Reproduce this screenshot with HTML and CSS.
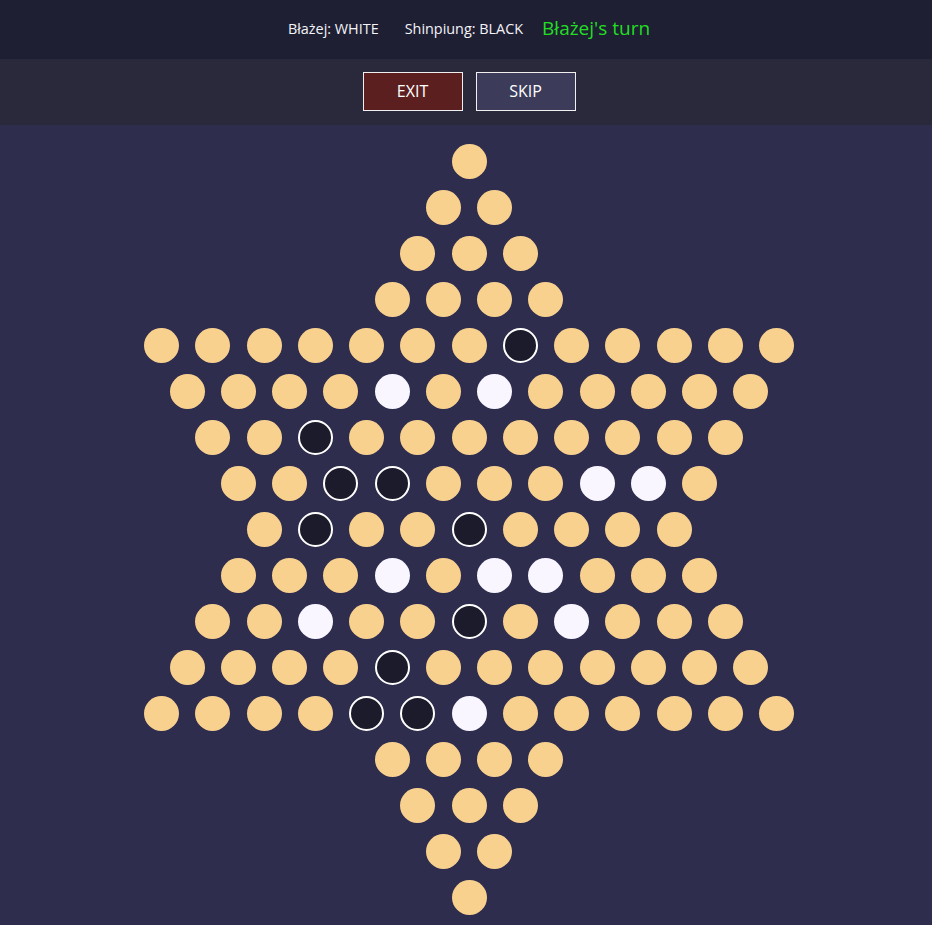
FILE: index.html
```html
<!DOCTYPE html>
<html>
<head>
<meta charset="utf-8">
<link rel="stylesheet" href="styles.css">
</head>
<body>
<div class="app">
  <header class="status">
    <span class="player">Błażej: WHITE</span>
    <span class="player second">Shinpiung: BLACK</span>
    <span class="turn">Błażej's turn</span>
  </header>
  <nav class="toolbar">
    <button class="btn exit">EXIT</button>
    <button class="btn skip">SKIP</button>
  </nav>
  <main class="board">
    <div class="row"><span class="c"></span></div>
    <div class="row"><span class="c"></span><span class="c"></span></div>
    <div class="row"><span class="c"></span><span class="c"></span><span class="c"></span></div>
    <div class="row"><span class="c"></span><span class="c"></span><span class="c"></span><span class="c"></span></div>
    <div class="row"><span class="c"></span><span class="c"></span><span class="c"></span><span class="c"></span><span class="c"></span><span class="c"></span><span class="c"></span><span class="c b"></span><span class="c"></span><span class="c"></span><span class="c"></span><span class="c"></span><span class="c"></span></div>
    <div class="row"><span class="c"></span><span class="c"></span><span class="c"></span><span class="c"></span><span class="c w"></span><span class="c"></span><span class="c w"></span><span class="c"></span><span class="c"></span><span class="c"></span><span class="c"></span><span class="c"></span></div>
    <div class="row"><span class="c"></span><span class="c"></span><span class="c b"></span><span class="c"></span><span class="c"></span><span class="c"></span><span class="c"></span><span class="c"></span><span class="c"></span><span class="c"></span><span class="c"></span></div>
    <div class="row"><span class="c"></span><span class="c"></span><span class="c b"></span><span class="c b"></span><span class="c"></span><span class="c"></span><span class="c"></span><span class="c w"></span><span class="c w"></span><span class="c"></span></div>
    <div class="row"><span class="c"></span><span class="c b"></span><span class="c"></span><span class="c"></span><span class="c b"></span><span class="c"></span><span class="c"></span><span class="c"></span><span class="c"></span></div>
    <div class="row"><span class="c"></span><span class="c"></span><span class="c"></span><span class="c w"></span><span class="c"></span><span class="c w"></span><span class="c w"></span><span class="c"></span><span class="c"></span><span class="c"></span></div>
    <div class="row"><span class="c"></span><span class="c"></span><span class="c w"></span><span class="c"></span><span class="c"></span><span class="c b"></span><span class="c"></span><span class="c w"></span><span class="c"></span><span class="c"></span><span class="c"></span></div>
    <div class="row"><span class="c"></span><span class="c"></span><span class="c"></span><span class="c"></span><span class="c b"></span><span class="c"></span><span class="c"></span><span class="c"></span><span class="c"></span><span class="c"></span><span class="c"></span><span class="c"></span></div>
    <div class="row"><span class="c"></span><span class="c"></span><span class="c"></span><span class="c"></span><span class="c b"></span><span class="c b"></span><span class="c w"></span><span class="c"></span><span class="c"></span><span class="c"></span><span class="c"></span><span class="c"></span><span class="c"></span></div>
    <div class="row"><span class="c"></span><span class="c"></span><span class="c"></span><span class="c"></span></div>
    <div class="row"><span class="c"></span><span class="c"></span><span class="c"></span></div>
    <div class="row"><span class="c"></span><span class="c"></span></div>
    <div class="row"><span class="c"></span></div>
  </main>
</div>
</body>
</html>
```

FILE: styles.css
```css
html, body {
  margin: 0;
  padding: 0;
  background: #2e2d4e;
  font-family: "Open Sans", "Noto Sans", sans-serif;
}

.app {
  width: 932px;
  height: 925px;
  overflow: hidden;
  background: #2e2d4e;
}

.status {
  height: 59px;
  background: #1f1f34;
  display: flex;
  align-items: center;
  justify-content: center;
  padding-left: 6px;
  padding-bottom: 4px;
  box-sizing: border-box;
}

.player {
  color: #f4f4f8;
  font-size: 14.4px;
  margin-top: 1px;
}

.player.second {
  margin-left: 26px;
}

.turn {
  color: #22dd22;
  font-size: 19px;
  margin-left: 19px;
}

.toolbar {
  height: 66px;
  background: #29293b;
  display: flex;
  align-items: center;
  justify-content: center;
  gap: 13px;
  padding-left: 6px;
  padding-bottom: 2px;
  box-sizing: border-box;
}

.btn {
  width: 100px;
  height: 39px;
  border: 1.5px solid #f0f0f0;
  color: #ffffff;
  font-family: "Open Sans", "Noto Sans", sans-serif;
  font-size: 16px;
  padding: 0;
  margin: 0;
}

.exit {
  background: #5c1f20;
}

.skip {
  background: #3c3b59;
}

.board {
  display: flex;
  flex-direction: column;
  align-items: center;
  gap: 11px;
  padding-top: 18.5px;
  padding-left: 6px;
}

.row {
  display: flex;
  gap: 16.25px;
  height: 35px;
}

.c {
  width: 35px;
  height: 35px;
  border-radius: 50%;
  background: #f9d18f;
  box-sizing: border-box;
  display: block;
}

.c.w {
  background: #f9f6ff;
}

.c.b {
  background: #1c1b2b;
  border: 2px solid #ffffff;
}
```
